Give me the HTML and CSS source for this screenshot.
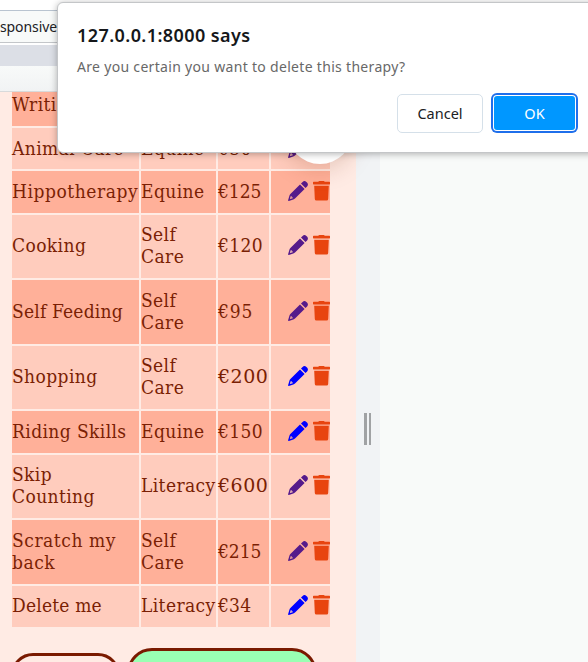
FILE: index.html
```
<!DOCTYPE html>
<html lang="en">
<head>
<meta charset="utf-8">
<title>Therapies</title>
<link rel="stylesheet" href="styles.css">
</head>
<body>
<svg class="sprite" aria-hidden="true">
  <symbol id="pen" viewBox="0 0 20 20"><path d="M13 2.5 14.6.9Q16.5-.8 18.4 1L19 1.6Q20.8 3.5 19.1 5.4L17.5 7ZM12 3.4 16.6 8 7 17.6Q6.3 18.3 5.3 18.6L.8 19.9Q0 20 .1 19.2L1.4 14.7Q1.7 13.7 2.4 13ZM3.6 14.9 2.7 15.3 1.9 18.1 4.7 17.3 5.1 16.4H3.6Z" fill-rule="evenodd"/></symbol>
  <symbol id="bin" viewBox="0 0 17 20"><path d="M5.3 .8 5.7.3Q5.9 0 6.3 0H10.7Q11.1 0 11.3.3L11.7 .8H16.4Q17 .8 17 1.5V2.8Q17 3.4 16.4 3.4H.6Q0 3.4 0 2.8V1.5Q0 .8 .6 .8ZM1.2 4.7H15.8L15.2 18Q15.1 19.5 13.6 19.5H3.4Q1.9 19.5 1.8 18Z"/></symbol>
</svg>
<div class="window">
  <header class="chrome">
    <div class="device-bar">sponsive</div>
    <div class="media-bar"></div>
    <div class="ruler-bar"></div>
  </header>
  <main class="stage">
    <section class="device">
      <div class="table">
        <div class="row first"><div>Writing</div><div></div><div></div><div></div></div>
        <div class="row second"><div>Animal Care</div><div>Equine</div><div>€50</div><div class="act"><svg class="pen"><use href="#pen"/></svg><svg class="bin"><use href="#bin"/></svg></div></div>
        <div class="row"><div class="wide">Hippotherapy</div><div>Equine</div><div class="tight">€125</div><div class="act"><svg class="pen"><use href="#pen"/></svg><svg class="bin"><use href="#bin"/></svg></div></div>
        <div class="row"><div>Cooking</div><div>Self<br>Care</div><div>€120</div><div class="act"><svg class="pen"><use href="#pen"/></svg><svg class="bin"><use href="#bin"/></svg></div></div>
        <div class="row"><div class="snug">Self Feeding</div><div>Self<br>Care</div><div class="loose">€95</div><div class="act"><svg class="pen"><use href="#pen"/></svg><svg class="bin"><use href="#bin"/></svg></div></div>
        <div class="row"><div>Shopping</div><div>Self<br>Care</div><div class="round">€200</div><div class="act"><svg class="pen new"><use href="#pen"/></svg><svg class="bin"><use href="#bin"/></svg></div></div>
        <div class="row"><div>Riding Skills</div><div>Equine</div><div>€150</div><div class="act"><svg class="pen new"><use href="#pen"/></svg><svg class="bin"><use href="#bin"/></svg></div></div>
        <div class="row"><div>Skip<br>Counting</div><div>Literacy</div><div class="round">€600</div><div class="act"><svg class="pen"><use href="#pen"/></svg><svg class="bin"><use href="#bin"/></svg></div></div>
        <div class="row"><div class="wide">Scratch my<br>back</div><div>Self<br>Care</div><div class="tight">€215</div><div class="act"><svg class="pen"><use href="#pen"/></svg><svg class="bin"><use href="#bin"/></svg></div></div>
        <div class="row"><div class="snug">Delete me</div><div>Literacy</div><div class="snug">€34</div><div class="act"><svg class="pen new"><use href="#pen"/></svg><svg class="bin"><use href="#bin"/></svg></div></div>
      </div>
      <div class="buttons"><div class="btn back"></div><div class="btn add"></div></div>
      <div class="fab"></div>
    </section>
    <div class="resizer"><i></i><i></i></div>
  </main>
  <div class="dialog" role="dialog">
    <h1>127.0.0.1:8000 says</h1>
    <p>Are you certain you want to delete this therapy?</p>
    <div class="choices"><button class="cancel">Cancel</button><button class="ok">OK</button></div>
  </div>
</div>
</body>
</html>
```
FILE: styles.css
```
* { box-sizing: border-box; }
body { margin: 0; background: #f8faf9; font-family: "Noto Sans", sans-serif; }
.sprite { display: none; }
.window { position: relative; width: 588px; height: 662px; overflow: hidden; display: flex; flex-direction: column; }

.chrome { background: #fff; padding-top: 10px; height: 92px; flex: none; }
.device-bar { height: 33px; border-top: 1px solid #b9c4d0; border-bottom: 1px solid #c3c6c9; background: #f8faf9; font-size: 14px; line-height: 32px; color: #202124; letter-spacing: -.1px; }
.media-bar { height: 21px; margin-top: 2px; background: #dcdfe6; }
.ruler-bar { height: 26px; background: linear-gradient(#f8faf9, #f1f3f4); border-bottom: 1px solid #d8dadb; }

.stage { flex: 1; display: flex; min-height: 0; }
.device { position: relative; width: 356px; background: #ffebe4; padding-left: 12px; color: #7a1f04; font: 19px/22px "DejaVu Serif Condensed", "DejaVu Serif", serif; }
.table { display: grid; width: 318px; gap: 2px; grid-template-rows: 34px 41px 42px 63px 64px 63px 42px 63px 64px 41px; }
.row { display: grid; grid-template-columns: 127px 75px 51px 59px; gap: 2px; }
.row > div { display: flex; align-items: center; padding-bottom: 3px; background: #ffccbd; white-space: nowrap; letter-spacing: .4px; }
.row:nth-child(odd) > div { background: #ffb099; }
.row.first > div { padding-bottom: 10px; }
.row.second > div { padding-bottom: 1px; }
.row > .wide { letter-spacing: .55px; }
.row > .snug { letter-spacing: .2px; }
.row > .tight { letter-spacing: 0; }
.row > .loose { letter-spacing: .9px; }
.row > .round { font-family: "DejaVu Serif", serif; letter-spacing: .5px; }
.row > .act { justify-content: flex-end; gap: 5px; }
.pen { width: 20px; height: 20px; fill: #551a8b; }
.pen.new { fill: #00f; }
.bin { width: 17px; height: 20px; fill: #e8440f; }
.buttons { display: flex; align-items: flex-start; gap: 7px; margin-top: 21px; height: 14px; overflow: hidden; margin-left: -1px; }
.btn { border: 3px solid #7a1a00; height: 50px; }
.back { width: 109px; margin-top: 5px; border-radius: 22px; }
.add { width: 190px; border-radius: 25px; background: #99ffb3; }
.fab { position: absolute; left: 287px; top: 6px; width: 66px; height: 66px; border-radius: 50%; background: #fff; box-shadow: 0 4px 24px rgba(120,40,10,.22); }
.resizer { width: 24px; background: #f1f3f5; display: flex; align-items: center; justify-content: center; gap: 2px; padding-right: 1px; }
.resizer i { width: 2.5px; height: 32px; background: #a0a2a4; margin-top: 104px; }

.dialog { position: absolute; left: 57px; top: 2px; width: 540px; height: 151px; padding: 20px 19px 0; background: #fff; border: 1px solid #c4c6c8; border-radius: 6px; box-shadow: 0 1px 7px rgba(0,0,0,.3); }
.dialog h1 { margin: 0; font-size: 18px; line-height: 25px; font-weight: 600; color: #15171a; letter-spacing: .42px; }
.dialog p { margin: 8px 0 0; font-size: 14px; line-height: 22px; color: #686868; letter-spacing: .31px; }
.choices { display: flex; gap: 10px; margin: 16px 0 0 320px; }
.choices button { width: 86px; height: 39px; padding: 0 0 1px; font: 14.5px "Noto Sans", sans-serif; border-radius: 5px; }
.cancel { background: #fff; border: 1px solid #d5e0e9; color: #202124; }
.choices .ok { width: 81px; height: 34px; margin: 2px 0 0 1px; border: 0; border-radius: 3px; background: #0097ff; color: #fff; box-shadow: 0 0 0 1px #fff, 0 0 0 3px #1f6feb; }
```
